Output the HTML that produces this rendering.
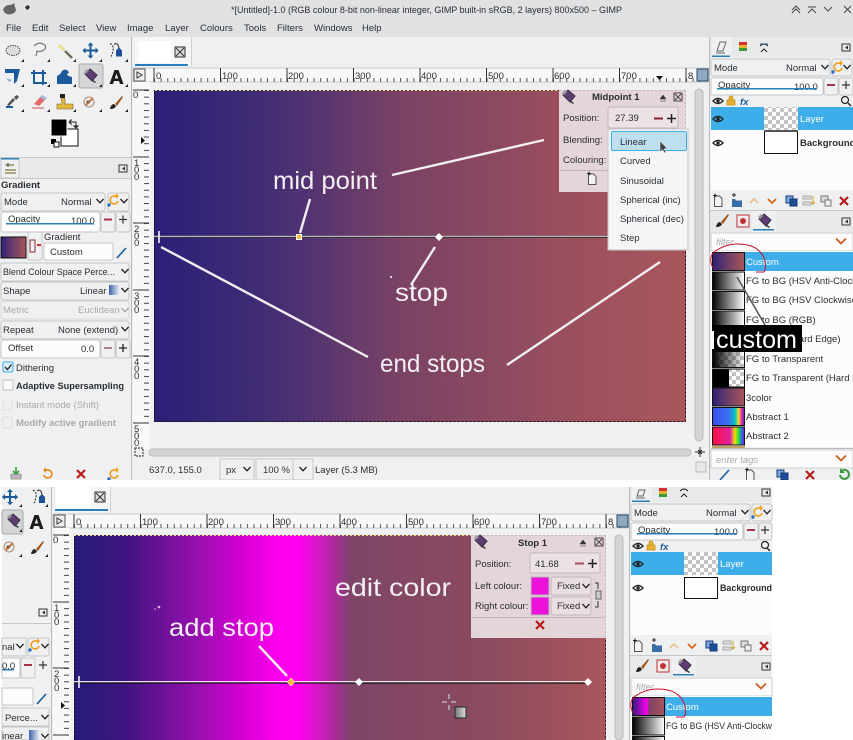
<!DOCTYPE html>
<html><head><meta charset="utf-8"><title>GIMP</title>
<style>
html,body{margin:0;padding:0;background:#fff;width:853px;height:740px;overflow:hidden}
svg{display:block;filter:blur(.35px)}
text{font-family:"Liberation Sans",sans-serif;font-size:9.5px;fill:#2b2e31}
.b{font-weight:bold}
.g{fill:#a8aaac}
.w{fill:#fff}
.big{font-size:25px;fill:#f4f0f4}
.f{fill:#fcfcfc;stroke:#c4c6c8;stroke-width:1}
.btn{fill:#eff0f1;stroke:#c4c6c8;stroke-width:1}
.an{stroke:#f2eef2;stroke-width:2.4;fill:none}
.m{font-size:9px}
</style></head><body>
<svg width="853" height="740" viewBox="0 0 853 740" xmlns="http://www.w3.org/2000/svg">
<defs>
<linearGradient id="g1" gradientUnits="userSpaceOnUse" x1="154" y1="0" x2="686" y2="0">
<stop offset="0" stop-color="#2b1f78"/><stop offset=".18" stop-color="#3e2b75"/><stop offset=".28" stop-color="#4f3272"/><stop offset=".46" stop-color="#7a4264"/><stop offset=".65" stop-color="#8c4a60"/><stop offset=".77" stop-color="#9a4f5e"/><stop offset="1" stop-color="#a9565b"/>
</linearGradient>
<linearGradient id="g2" gradientUnits="userSpaceOnUse" x1="74" y1="0" x2="606" y2="0">
<stop offset="0" stop-color="#261b78"/><stop offset=".1" stop-color="#401480"/><stop offset=".237" stop-color="#9a10b0"/><stop offset=".31" stop-color="#d000d0"/><stop offset=".387" stop-color="#ff00f0"/><stop offset=".425" stop-color="#ff00ee"/><stop offset=".457" stop-color="#d818c8"/><stop offset=".487" stop-color="#b028a0"/><stop offset=".508" stop-color="#8f3a80"/><stop offset=".52" stop-color="#7f4567"/><stop offset=".76" stop-color="#8a4a60"/><stop offset="1" stop-color="#a9565b"/>
</linearGradient>
<linearGradient id="t1"><stop offset="0" stop-color="#2e2076"/><stop offset=".5" stop-color="#703f68"/><stop offset="1" stop-color="#a9565b"/></linearGradient>
<linearGradient id="t2"><stop offset="0" stop-color="#2e1a80"/><stop offset=".45" stop-color="#ff00ee"/><stop offset=".52" stop-color="#804068"/><stop offset="1" stop-color="#a9565b"/></linearGradient>
<linearGradient id="bw"><stop offset="0" stop-color="#000"/><stop offset="1" stop-color="#fff"/></linearGradient>
<linearGradient id="rb"><stop offset="0" stop-color="#3a4cf0"/><stop offset=".5" stop-color="#3a70f0"/><stop offset=".7" stop-color="#00c0c0"/><stop offset=".82" stop-color="#f0e020"/><stop offset=".9" stop-color="#f030a0"/><stop offset="1" stop-color="#4030c0"/></linearGradient>
<linearGradient id="rb2"><stop offset="0" stop-color="#ff1040"/><stop offset=".55" stop-color="#e020a0"/><stop offset=".7" stop-color="#f0e000"/><stop offset=".82" stop-color="#20e040"/><stop offset=".92" stop-color="#3060f0"/><stop offset="1" stop-color="#8020c0"/></linearGradient>
<linearGradient id="shape"><stop offset="0" stop-color="#3f62a8"/><stop offset="1" stop-color="#e4eaf4"/></linearGradient>
<linearGradient id="bt"><stop offset="0" stop-color="#000"/><stop offset="1" stop-color="#000" stop-opacity="0"/></linearGradient>
<linearGradient id="sw"><stop offset="0" stop-color="#777"/><stop offset="1" stop-color="#ddd"/></linearGradient>
<pattern id="chk" width="8" height="8" patternUnits="userSpaceOnUse"><rect width="8" height="8" fill="#fff"/><rect width="4" height="4" fill="#c4c4c4"/><rect x="4" y="4" width="4" height="4" fill="#c4c4c4"/></pattern>
<pattern id="rt1" width="6.65" height="14" patternUnits="userSpaceOnUse" x="154" y="68"><rect x="0" y="10" width="1" height="4" fill="#555"/></pattern>
<pattern id="rt2" width="6.65" height="14" patternUnits="userSpaceOnUse" x="74" y="514"><rect x="0" y="10" width="1" height="4" fill="#555"/></pattern>
<pattern id="rv1" width="16" height="6.65" patternUnits="userSpaceOnUse" x="133" y="90"><rect x="11" y="0" width="5" height="1" fill="#444"/></pattern>
<pattern id="rv2" width="16" height="6.65" patternUnits="userSpaceOnUse" x="53" y="535"><rect x="11" y="0" width="5" height="1" fill="#444"/></pattern>
<g id="grad"><path d="M-5 -2 L0 -7 L7 -1 L2 5Z" fill="#5e3d72" stroke="#3a2a44"/><path d="M-6 -4l3-3 2 2-3 3z" fill="#999"/><path d="M3 4l3 2-1 1-3-2z" fill="#333"/></g>
<g id="eye"><path d="M-5 0Q0 -5 5 0Q0 5 -5 0Z" fill="none" stroke="#222" stroke-width="1.3"/><circle r="1.7" fill="#222"/></g>
<g id="x"><path d="M-4 -4L4 4M4 -4L-4 4" stroke="#b71c1c" stroke-width="2.2"/></g>
<g id="pen"><path d="M-5 5L4 -5" stroke="#1d5a9c" stroke-width="1.6"/></g>
<g id="new"><path d="M-3.500 -5h5l2.500 2.500v8h-7.500z" fill="#f4f4f4" stroke="#555"/><path d="M-5 -5.500h4M-3 -7.500v4" stroke="#222"/></g>
<g id="reset"><path d="M-4 1A4 4 0 1 0 0 -4H-3" fill="none" stroke="#e88a1a" stroke-width="1.7"/><path d="M-2 -7L-5 -4L-2 -1z" fill="#e88a1a"/></g>
<g id="reset2"><path d="M4 1A4 4 0 1 1 0 -4H3" fill="none" stroke="#f0a020" stroke-width="1.7"/><path d="M2 -7L5 -4L2 -1z" fill="#f0a020"/><circle cx="-5" cy="5" r="1.700" fill="#2a70c0"/></g>
<g id="chev"><path d="M-3.500 -2L0 1.800L3.500 -2" fill="none" stroke="#222" stroke-width="1.300"/></g>
<g id="ochev"><path d="M-5 -2.500L0 2.500L5 -2.500" fill="none" stroke="#d05a18" stroke-width="1.800"/></g>
<g id="move"><path d="M0 -7.500V7.500M-7.500 0H7.500" stroke="#1d5a9c" stroke-width="2"/><path d="M0 -8l-3 3h6zM0 8l-3-3h6zM-8 0l3-3v6zM8 0l-3-3v6z" fill="#1d5a9c"/></g>
<g id="path"><path d="M-7 -7Q-3 -5 -4 0T-6 6" stroke="#222" stroke-dasharray="2 1.200" fill="none"/><path d="M-3 -6Q1 -9 2 -2" stroke="#222" fill="none"/><path d="M-1 6V0l3-3 3 3v6z" fill="#1d4e96"/></g>
<g id="textA"><path d="M-7 7L-2 -7H2L7 7H3.500L2.500 4H-2.500L-3.500 7ZM-1.700 1.500H1.700L0 -3.500Z" fill="#1c1c1c"/></g>
<g id="heal"><circle r="5" fill="#eee" stroke="#b08a70"/><path d="M-3 3L4 -4" stroke="#c07a50" stroke-width="2"/><circle cx="-1" cy="0" r="1.600" fill="#8a5a40"/></g>
<g id="brush"><path d="M-6 6Q-5 1 -2 1L0 3Q-1 6 -6 6Z" fill="#222"/><path d="M-1 1L6 -7L7 -6L1 3Z" fill="#a05a20"/></g>
<g id="dockicons">
<use href="#new" x="0" y="0"/>
<path d="M14 -2h3l1 1.500h6v6.500h-10z" fill="#3a6ea8"/><path d="M14 -6h4M16 -8v4" stroke="#222"/>
<path d="M32 2L36 -2L40 2" fill="none" stroke="#e8c090" stroke-width="1.800"/>
<path d="M50 -2L54 2L58 -2" fill="none" stroke="#d86818" stroke-width="1.800"/>
<rect x="68" y="-5" width="7" height="7" fill="#7aa6d8" stroke="#123a78"/><rect x="72" y="-2" width="7" height="7" fill="#1d4e96" stroke="#123a78"/>
<rect x="85" y="-5" width="8" height="3" fill="#ddd" stroke="#aaa"/><rect x="85" y="1" width="8" height="3" fill="#ddd" stroke="#aaa"/><path d="M95 -5v8l-2-2m2 2l2-2" stroke="#d8a020" fill="none"/>
<rect x="103" y="-5" width="7" height="6" fill="#ddd" stroke="#777"/><rect x="107" y="-1" width="6" height="6" fill="#eee" stroke="#777"/>
<use href="#x" x="126"/>
</g>
</defs>

<!-- TOP WINDOW -->
<rect width="853" height="480" fill="#eff0f1"/>
<rect width="853" height="37" fill="#dfe1e3"/>
<path d="M3 10q2-6 8-5l3-2 1 4q2 4-1 6-5 3-9 0z" fill="#666"/>
<path d="M23 12l3-3-1-2 3-2 2 2-2 3-2-1z" fill="#333"/>
<text x="231" y="13" font-size="9.500" textLength="391" lengthAdjust="spacingAndGlyphs">*[Untitled]-1.0 (RGB colour 8-bit non-linear integer, GIMP built-in sRGB, 2 layers) 800x500 – GIMP</text>
<path d="M792 10l4-4 4 4M792 13l4-4 4 4M808 7h8M808 13l4-4 4 4M824 7l4 4 4-4M844 6l7 7M851 6l-7 7" fill="none" stroke="#444" stroke-width="1"/>
<g>
<text x="6" y="31">File</text><text x="32" y="31">Edit</text><text x="59" y="31">Select</text><text x="96" y="31">View</text><text x="127" y="31">Image</text><text x="165" y="31">Layer</text><text x="200" y="31">Colours</text><text x="244" y="31">Tools</text><text x="277" y="31">Filters</text><text x="314" y="31">Windows</text><text x="362" y="31">Help</text>
</g>
<!-- toolbox -->
<rect x="131" y="37" width="1" height="443" fill="#b8babc"/>
<rect x="79" y="64" width="24" height="24" rx="2" fill="#d3d5d7" stroke="#a8aaac"/>
<ellipse cx="13" cy="50.500" rx="7" ry="5" fill="#ddd" stroke="#444" stroke-dasharray="1.500 1"/>
<path d="M34 46q5-5 11-1 2 4-3 6-3 1-5 0l-1 5" fill="none" stroke="#777" stroke-width="1.200"/>
<path d="M59 45l5 5M65 51l7 7" stroke="#f0dc90" stroke-width="3"/><path d="M65 51l7 7" stroke="#666" stroke-width="2.200"/>
<use href="#move" x="90.500" y="50.500"/>
<use href="#path" x="117" y="50.500"/>
<path d="M5 69h15l-3 12-3 3v-11h-9z" fill="#1d5a9c"/><path d="M6 78l6 2-3 2z" fill="#8ab0d8"/>
<path d="M31 73h15M43 70v15M34 70v13h13" fill="none" stroke="#1d5a9c" stroke-width="2"/>
<path d="M57 84v-8q4-2 5-5 3-3 6 0 2 2-1 3 0 2 5 3v7z" fill="#1d5a9c"/>
<use href="#grad" x="90" y="76"/>
<use href="#textA" x="116.500" y="77"/>
<path d="M7 105l6-7 2 2-6 6zM14 97l3-2 2 2-3 3z" fill="#555"/><path d="M6 107h7" stroke="#1d5a9c" stroke-width="2"/>
<path d="M34 104l8-9 5 3-8 8z" fill="#e46a6a"/><path d="M40 97l2-2 5 3-2 2z" fill="#9cc0e0"/><path d="M32 108h12" stroke="#d05050"/>
<path d="M57 109v-5h5v-2q-2-4 1-4t2 4v2h8v5z" fill="#e0b840" stroke="#7a6020" stroke-width=".600"/><rect x="60" y="94" width="5" height="4" fill="#222"/>
<use href="#heal" x="89" y="102"/>
<use href="#brush" x="116" y="103"/>
<g fill="#222"><path d="M24 62h-3l3-3zM50 62h-3l3-3zM76 62h-3l3-3zM102 62h-3l3-3zM128 62h-3l3-3zM24 87h-3l3-3zM50 87h-3l3-3zM76 87h-3l3-3zM102 87h-3l3-3zM128 87h-3l3-3zM24 112h-3l3-3zM50 112h-3l3-3zM76 112h-3l3-3zM102 112h-3l3-3zM128 112h-3l3-3z"/></g>
<rect x="61" y="129" width="17" height="17" fill="#fff" stroke="#111"/>
<rect x="51" y="119" width="16" height="17" fill="#000" stroke="#fff"/>
<path d="M72 122h4v5M71 120v4l-2-2zM74 126h4l-2 2z" fill="none" stroke="#222"/>
<rect x="51" y="139" width="5" height="5" fill="#000"/><rect x="54" y="142" width="5" height="5" fill="#fff" stroke="#111"/>
<rect x="0" y="157" width="131" height="1" fill="#c4c6c8"/>
<rect x="0" y="158" width="131" height="20" fill="#e8e9ea"/>
<rect x="1" y="158" width="18" height="20" fill="#eff0f1" stroke="#c4c6c8"/><rect x="1" y="158" width="18" height="1.500" fill="#2980b9"/>
<path d="M5 165h9M5 170h11M5 173h11" stroke="#8a7840" stroke-width="1.200" fill="none"/><path d="M8 163v4" stroke="#333"/>
<rect x="119" y="165" width="8" height="7" fill="none" stroke="#333"/><path d="M122 168.500l3-2v4z" fill="#333"/>
<rect x="0" y="178" width="131" height="1" fill="#c4c6c8"/>
<text x="1" y="188" class="b" font-size="9.500">Gradient</text>
<rect x="1" y="193" width="104" height="18" rx="2" class="btn"/><text x="4" y="205">Mode</text><text x="61" y="205">Normal</text><use href="#chev" x="100" y="201"/>
<rect x="108" y="193" width="21" height="18" rx="2" class="btn"/><use href="#reset2" x="114" y="200"/><use href="#chev" x="124" y="201"/>
<rect x="1" y="212" width="99" height="20" rx="2" class="f"/><text x="8" y="222">Opacity</text><text x="71" y="224">100.0</text><rect x="6" y="223" width="88" height="1.500" fill="#2980b9"/>
<rect x="101" y="212" width="14" height="20" rx="2" class="btn"/><path d="M104 219.500h8" stroke="#a8324a" stroke-width="2"/>
<rect x="116" y="212" width="14" height="20" rx="2" class="btn"/><path d="M119 219.500h8M123 215.500v8" stroke="#333" stroke-width="1.200"/>
<rect x="1" y="237" width="25" height="21" fill="url(#t1)" stroke="#111"/>
<rect x="28" y="232" width="14" height="28" rx="2" class="btn"/><rect x="30" y="240" width="5" height="12" fill="none" stroke="#8a2a2a"/><path d="M41 245l-4 0" stroke="#c83030" stroke-width="2"/>
<text x="44" y="240">Gradient</text>
<rect x="44" y="243" width="69" height="17" rx="2" class="f"/><text x="50" y="255">Custom</text><use href="#pen" x="122" y="253"/>
<rect x="1" y="263" width="128" height="18" rx="2" class="btn"/><text x="3" y="275" textLength="112" lengthAdjust="spacingAndGlyphs">Blend Colour Space Perce...</text><use href="#chev" x="125" y="271"/>
<rect x="1" y="282" width="128" height="18" rx="2" class="btn"/><text x="3" y="294">Shape</text><text x="80" y="294">Linear</text><rect x="109" y="285" width="10" height="10" fill="url(#shape)"/><use href="#chev" x="125" y="290"/>
<rect x="1" y="301" width="128" height="18" rx="2" fill="#eff0f1" stroke="#d8d9da"/><text x="3" y="313" class="g">Metric</text><text x="78" y="313" class="g">Euclidean</text><use href="#chev" x="125" y="310" opacity=".35"/>
<rect x="1" y="321" width="128" height="18" rx="2" class="btn"/><text x="3" y="333">Repeat</text><text x="58" y="333">None (extend)</text><use href="#chev" x="125" y="329"/>
<rect x="1" y="340" width="99" height="18" rx="2" class="f"/><text x="8" y="351">Offset</text><text x="81" y="352">0.0</text>
<rect x="101" y="340" width="14" height="18" rx="2" class="btn"/><path d="M104 348h8" stroke="#b08090" stroke-width="2"/>
<rect x="116" y="340" width="14" height="18" rx="2" class="btn"/><path d="M119 348h8M123 344v8" stroke="#222" stroke-width="1.300"/>
<rect x="3" y="362" width="10" height="10" rx="1.500" fill="#dceef8" stroke="#3daee9"/><path d="M5 367l2.500 2.500 4-5" fill="none" stroke="#222" stroke-width="1.400"/><text x="16" y="371">Dithering</text>
<rect x="3" y="380" width="10" height="10" rx="1.500" fill="#fcfcfc" stroke="#bbb"/><text x="16" y="389" class="b" textLength="108" lengthAdjust="spacingAndGlyphs">Adaptive Supersampling</text>
<rect x="3" y="400" width="9" height="10" rx="1.500" fill="none" stroke="#dedfe0"/><text x="16" y="408" class="g">Instant mode  (Shift)</text>
<rect x="3" y="417" width="9" height="11" rx="1.500" fill="none" stroke="#dedfe0"/><text x="16" y="426" class="g b" textLength="100" lengthAdjust="spacingAndGlyphs">Modify active gradient</text>
<path d="M11 474h10v5h-10z" fill="#bbb" stroke="#666" stroke-width=".600"/><path d="M16 467v6M13 471l3 3 3-3" stroke="#3a9a3a" stroke-width="1.600" fill="none"/>
<use href="#reset" x="48" y="474"/><use href="#x" x="81" y="474"/><use href="#reset2" x="114" y="474"/>

<!-- tab & ruler -->
<rect x="135" y="37" width="56" height="29" fill="#f4f5f6"/><rect x="191" y="37" width="1" height="29" fill="#d0d2d4"/>
<rect x="139" y="41" width="32" height="22" fill="#fff"/>
<rect x="175" y="47" width="10" height="10" fill="#ddd" stroke="#333"/><path d="M176 48l8 8M184 48l-8 8" stroke="#333"/>
<rect x="135" y="64" width="53" height="2" fill="#2980b9"/>
<rect x="133" y="68" width="576" height="14" fill="#f8f8f8" stroke="#c8cacc"/>
<rect x="134" y="69" width="11" height="12" fill="#eee" stroke="#555"/><path d="M137 72l5 3-5 3z" fill="none" stroke="#333"/>
<rect x="154" y="68" width="552" height="14" fill="url(#rt1)"/>
<g font-size="9">
<text x="156" y="79">0</text><text x="222" y="79">100</text><text x="288" y="79">200</text><text x="355" y="79">300</text><text x="421" y="79">400</text><text x="488" y="79">500</text><text x="554" y="79">600</text><text x="621" y="79">700</text><text x="688" y="79">8</text>
</g>
<path d="M154 68v14M220.500 68v14M287 68v14M353.500 68v14M420 68v14M486.500 68v14M553 68v14M619.500 68v14M686 68v14" stroke="#333"/>
<path d="M656 76h7l-3.500 4z" fill="#111"/>
<rect x="697" y="69" width="11" height="12" fill="#8fa8c0" stroke="#2a4a6a"/>
<!-- vertical ruler -->
<rect x="133" y="82" width="17" height="368" fill="#f8f8f8"/>
<rect x="133" y="90" width="16" height="333" fill="url(#rv1)"/>
<g font-size="8.500">
<path d="M133 90h16M133 157h16M133 223h16M133 290h16M133 356h16M133 423h16" stroke="#333"/>
<text x="133" y="98">0</text>
<text x="134" y="166">1</text><text x="134" y="173">0</text><text x="134" y="180">0</text>
<text x="134" y="232">2</text><text x="134" y="239">0</text><text x="134" y="246">0</text>
<text x="134" y="299">3</text><text x="134" y="306">0</text><text x="134" y="313">0</text>
<text x="134" y="365">4</text><text x="134" y="372">0</text><text x="134" y="379">0</text>
<text x="134" y="432">5</text><text x="134" y="439">0</text><text x="134" y="446">0</text>
</g>
<path d="M141 137v7l4-3.500z" fill="#111"/>
<!-- canvas -->
<rect x="154" y="90" width="532" height="332" fill="url(#g1)"/>
<rect x="154.500" y="90.500" width="531" height="331" fill="none" stroke="#111" stroke-dasharray="2 2"/>
<path d="M155 90.500H686" stroke="#ead870" stroke-dasharray="2 2"/>
<rect x="695" y="89" width="8" height="352" rx="4" fill="#d4d5d6" stroke="#bbb"/>
<rect x="149" y="449" width="542" height="7" rx="3.500" fill="#d4d5d6" stroke="#bbb"/>
<rect x="135" y="448" width="8" height="8" fill="#eee" stroke="#222" stroke-dasharray="2 1"/>
<path d="M700 447v10M695 452h10M698 450l4 4M702 450l-4 4" stroke="#333"/>
<rect x="696" y="462" width="10" height="10" fill="#e8e8e8" stroke="#bbb"/>
<path d="M154 237.500H610" stroke="#111" stroke-width="1"/><path d="M154 236.500H610" stroke="#b4b0b8" stroke-width="1.400"/>
<path d="M159 231v12" stroke="#fff" stroke-width="1.500"/>
<rect x="296.500" y="234.500" width="5" height="5" fill="#f0c040" stroke="#fff"/>
<path d="M439 233l4 4-4 4-4-4z" fill="#fff"/>
<circle cx="391" cy="277" r="1" fill="#fff"/>
<path class="an" d="M392 175L544 140M300 233L310 199M161 247L368 357M411 285L435 247M507 365L660 262"/>
<text x="273" y="189" class="big" textLength="104" lengthAdjust="spacingAndGlyphs">mid point</text>
<text x="395" y="301" class="big" textLength="53" lengthAdjust="spacingAndGlyphs">stop</text>
<text x="380" y="372" class="big" textLength="105" lengthAdjust="spacingAndGlyphs">end stops</text>
<!-- midpoint dialog -->
<rect x="559" y="90" width="127" height="102" fill="#e3d5d8"/>
<path d="M559 90.500h127M685.500 90v102" stroke="#c4b6ba" stroke-dasharray="2 2"/>
<use href="#grad" x="568" y="97"/>
<text x="592" y="100" class="b">Midpoint 1</text>
<path d="M660 99l3-4 3 4zM660 101h6" fill="#333" stroke="#333" stroke-width=".500"/>
<rect x="674" y="93" width="8" height="8" fill="none" stroke="#444"/><path d="M675 94l6 6M681 94l-6 6" stroke="#444"/>
<text x="563" y="121">Position:</text>
<rect x="608" y="107" width="70" height="21" rx="2" fill="#ece2e4" stroke="#c4b6ba"/>
<text x="615" y="121">27.39</text>
<path d="M654 118.500h9" stroke="#8c1f2b" stroke-width="2"/><path d="M667 118.500h9M671.500 114v9" stroke="#222" stroke-width="1.500"/>
<text x="563" y="143">Blending:</text><text x="563" y="163">Colouring:</text>
<path d="M560 170.500h48" stroke="#c4b6ba"/>
<use href="#new" x="592" y="179"/>
<rect x="608" y="129" width="80" height="121" fill="#f4f5f6" stroke="#c4c6c8"/>
<rect x="611.500" y="131.500" width="75" height="19" rx="1.500" fill="#bddff0" stroke="#3daee9"/>
<g font-size="9">
<text x="620" y="145">Linear</text><text x="620" y="164">Curved</text><text x="620" y="184">Sinusoidal</text><text x="620" y="203">Spherical (inc)</text><text x="620" y="222">Spherical (dec)</text><text x="620" y="241">Step</text>
</g>
<path d="M660 141v11l2.500-2.500 2 3.500 1.500-.8-1.800-3.300 3-.4z" fill="#444" stroke="#fff" stroke-width=".500"/>
<!-- status -->
<text x="149" y="473">637.0, 155.0</text>
<rect x="220" y="459" width="34" height="21" class="btn"/><text x="226" y="473">px</text><use href="#chev" x="247" y="469"/>
<rect x="256" y="459" width="37" height="21" class="btn"/><text x="263" y="473">100 %</text>
<rect x="293" y="459" width="20" height="21" class="btn"/><use href="#chev" x="303" y="469"/>
<text x="315" y="473">Layer (5.3 MB)</text>

<!-- TOP RIGHT DOCK -->
<rect x="709" y="37" width="1" height="443" fill="#b8babc"/>
<rect x="710" y="37" width="143" height="20" fill="#e8e9ea"/>
<rect x="712" y="37" width="20" height="20" fill="#eff0f1"/><rect x="712" y="55.500" width="18" height="1.500" fill="#2980b9"/>
<path d="M717 51l3-9h6l-3 9zM716 53h9" fill="none" stroke="#666"/>
<rect x="739" y="42" width="8" height="3" fill="#d03030"/><rect x="739" y="45" width="8" height="3" fill="#e8b030"/><rect x="739" y="48" width="8" height="3" fill="#3a9a3a"/>
<path d="M760 46q4-4 8 0M761 52l3-3 3 3" fill="none" stroke="#222"/><path d="M760 44h3M765 44h3" stroke="#1d5a9c"/>
<rect x="842" y="44" width="8" height="7" fill="none" stroke="#333"/><path d="M845 47.500l3-2v4z" fill="#333"/>
<rect x="711" y="59" width="119" height="17" rx="2" class="btn"/><text x="714" y="71">Mode</text><text x="786" y="71">Normal</text><use href="#chev" x="825" y="67"/>
<rect x="832" y="59" width="20" height="17" rx="2" class="btn"/><use href="#reset2" x="838" y="67"/><use href="#chev" x="847" y="67"/>
<rect x="711" y="78" width="112" height="17" rx="2" class="f"/><text x="718" y="88">Opacity</text><text x="794" y="90">100.0</text><rect x="717" y="88" width="100" height="1.500" fill="#2980b9"/>
<rect x="824" y="78" width="14" height="17" rx="2" class="btn"/><path d="M827 85h8" stroke="#a8324a" stroke-width="2"/>
<rect x="839" y="78" width="14" height="17" rx="2" class="btn"/><path d="M842 85h8M846 81v8" stroke="#333" stroke-width="1.200"/>
<use href="#eye" x="718" y="101"/>
<path d="M727 105v-5h8v5zM729 100v-2a2 2 0 0 1 4 0v2" fill="#e8b030" stroke="#c89020" stroke-width=".800"/>
<text x="740" y="105" class="b" font-size="9" style="fill:#1d5a9c;font-style:italic">fx</text>
<circle cx="845" cy="100" r="3.500" fill="none" stroke="#222" stroke-width="1.200"/><path d="M848 103l3 3" stroke="#222" stroke-width="1.400"/>
<rect x="711" y="107" width="142" height="83" fill="#fcfcfc"/>
<rect x="711" y="107" width="142" height="23" fill="#3daee9"/>
<use href="#eye" x="718" y="119"/>
<rect x="764" y="107" width="34" height="23" fill="url(#chk)"/>
<text x="800" y="122" class="w">Layer</text>
<use href="#eye" x="718" y="143"/>
<rect x="764.500" y="131.500" width="33" height="22" fill="#fff" stroke="#111"/><rect x="764" y="130" width="34" height="2" fill="#555"/>
<text x="800" y="146" class="b">Background</text>
<rect x="711" y="190" width="142" height="20" fill="#eff0f1"/>
<use href="#dockicons" x="718" y="201"/>
<rect x="710" y="210" width="143" height="1" fill="#c4c6c8"/>
<rect x="710" y="211" width="143" height="21" fill="#e8e9ea"/>
<rect x="752" y="211" width="24" height="21" fill="#eff0f1"/><rect x="753" y="229" width="21" height="1.500" fill="#2980b9"/>
<use href="#brush" x="722" y="221"/>
<rect x="737" y="215" width="12" height="12" fill="#eee" stroke="#c03030"/><circle cx="743" cy="221" r="3" fill="#c03030"/>
<use href="#grad" x="764" y="221"/>
<rect x="842" y="218" width="8" height="7" fill="none" stroke="#333"/><path d="M845 221.500l3-2v4z" fill="#333"/>
<rect x="711" y="233" width="142" height="18" fill="#fcfcfc" stroke="#ccc"/>
<text x="716" y="245" class="g" style="font-style:italic">filter</text><use href="#ochev" x="841" y="241"/>
<rect x="711" y="251" width="142" height="196" fill="#fcfcfc"/>
<rect x="745" y="252" width="108" height="19" fill="#3daee9"/>
<g stroke="#111" stroke-width="1">
<rect x="712.500" y="252.500" width="32" height="18" fill="url(#t1)"/>
<rect x="712.500" y="272" width="32" height="18" fill="url(#bw)"/>
<rect x="712.500" y="291.500" width="32" height="18" fill="url(#bw)"/>
<rect x="712.500" y="311" width="32" height="18" fill="url(#bw)"/>
<rect x="712.500" y="349.500" width="32" height="18" fill="url(#chk)"/>
<rect x="712.500" y="369" width="32" height="18" fill="url(#chk)"/>
<rect x="712.500" y="388" width="32" height="18" fill="url(#t1)"/>
<rect x="712.500" y="407.500" width="32" height="18" fill="url(#rb)"/>
<rect x="712.500" y="427" width="32" height="18" fill="url(#rb2)"/>
</g>
<rect x="713" y="350" width="31" height="17" fill="url(#bt)"/>
<rect x="713" y="369.500" width="16" height="17" fill="#000"/>
<rect x="712" y="446" width="33" height="2" fill="#c0a060"/>
<text x="746" y="265" class="w">Custom</text>
<text x="746" y="284">FG to BG (HSV Anti-Clockwise Hue)</text>
<text x="746" y="303">FG to BG (HSV Clockwise Hue)</text>
<text x="746" y="323">FG to BG (RGB)</text>
<text x="746" y="342">FG to BG (Hard Edge)</text>
<text x="746" y="362">FG to Transparent</text>
<text x="746" y="381">FG to Transparent (Hard Edge)</text>
<text x="746" y="401">3color</text>
<text x="746" y="420">Abstract 1</text>
<text x="746" y="439">Abstract 2</text>
<rect x="711" y="448" width="142" height="1" fill="#bbb"/>
<rect x="711" y="450" width="142" height="18" fill="#fcfcfc" stroke="#ccc"/>
<text x="716" y="463" class="g" style="font-style:italic">enter tags</text><use href="#ochev" x="841" y="458"/>
<use href="#pen" x="725" y="475"/><use href="#new" x="750" y="475"/>
<rect x="777" y="470" width="7" height="7" fill="#7aa6d8" stroke="#123a78"/><rect x="781" y="473" width="7" height="7" fill="#1d4e96" stroke="#123a78"/>
<use href="#x" x="810" y="475"/>
<path d="M840 475a4.500 4.500 0 1 0 1.500-4" fill="none" stroke="#3a9a3a" stroke-width="2"/><path d="M840 468v5h5z" fill="#3a9a3a"/>
<path d="M737 277L765 325" stroke="#555" stroke-width="1.500"/>
<rect x="712" y="325" width="90" height="27" fill="#000"/>
<rect x="712" y="331" width="2" height="18" fill="#fff"/>
<text x="716" y="348" class="big" style="fill:#fff" font-size="25" textLength="81" lengthAdjust="spacingAndGlyphs">custom</text>
<path d="M713 268Q708 258 714 252Q725 244 738 244Q758 244 764 258Q767 268 764 272L756 272" fill="none" stroke="#c8102e" stroke-width="1"/>

<!-- BOTTOM WINDOW -->
<rect x="0" y="480" width="853" height="260" fill="#fff"/>
<rect x="2" y="487" width="770" height="253" fill="#eff0f1"/>
<rect x="51" y="487" width="1" height="253" fill="#b8babc"/>
<rect x="2" y="510" width="21" height="24" rx="2" fill="#d3d5d7" stroke="#a8aaac"/>
<use href="#move" x="10" y="497"/><use href="#path" x="40" y="497"/>
<use href="#grad" x="13" y="521"/><use href="#textA" x="36.500" y="522"/>
<use href="#heal" x="9" y="547"/><use href="#brush" x="37" y="548"/>
<g fill="#222"><path d="M22 507h-3l3-3zM48 507h-3l3-3zM22 532h-3l3-3zM22 557h-3l3-3zM48 557h-3l3-3z"/></g>
<rect x="39" y="609" width="8" height="7" fill="none" stroke="#333"/><path d="M42 612.500l3-2v4z" fill="#333"/>
<rect x="2" y="623" width="49" height="1" fill="#c4c6c8"/>
<rect x="2" y="638" width="24" height="18" class="btn"/><text x="2" y="650">nal</text><use href="#chev" x="20" y="646"/>
<rect x="28" y="638" width="21" height="18" rx="2" class="btn"/><use href="#reset2" x="35" y="645"/><use href="#chev" x="45" y="646"/>
<rect x="2" y="658" width="18" height="20" class="f"/><text x="2" y="669">0.0</text><rect x="2" y="669" width="12" height="1.500" fill="#2980b9"/>
<rect x="21" y="658" width="14" height="20" rx="2" class="btn"/><path d="M24 665h8" stroke="#a8324a" stroke-width="2"/>
<path d="M39 665h8M43 661v8" stroke="#333" stroke-width="1.200"/>
<rect x="2" y="688" width="31" height="17" class="f"/><use href="#pen" x="42" y="699"/>
<rect x="2" y="708" width="47" height="18" class="btn"/><text x="5" y="721">Perce...</text><use href="#chev" x="45" y="717"/>
<rect x="2" y="727" width="47" height="13" class="btn"/><text x="2" y="739">inear</text><rect x="29" y="730" width="10" height="10" fill="url(#shape)"/><use href="#chev" x="45" y="736"/>
<!-- tab/ruler -->
<rect x="55" y="487" width="55" height="25" fill="#f4f5f6"/><rect x="110" y="487" width="1" height="26" fill="#d0d2d4"/>
<rect x="56" y="487" width="35" height="21" fill="#fff"/>
<rect x="95" y="492" width="10" height="10" fill="#ddd" stroke="#333"/><path d="M96 493l8 8M104 493l-8 8" stroke="#333"/>
<rect x="55" y="509" width="53" height="2" fill="#2980b9"/>
<rect x="53" y="514" width="576" height="14" fill="#f8f8f8" stroke="#c8cacc"/>
<rect x="54" y="515" width="11" height="12" fill="#eee" stroke="#555"/><path d="M57 518l5 3-5 3z" fill="none" stroke="#333"/>
<rect x="74" y="514" width="552" height="14" fill="url(#rt2)"/>
<g font-size="9">
<text x="76" y="525">0</text><text x="142" y="525">100</text><text x="208" y="525">200</text><text x="275" y="525">300</text><text x="341" y="525">400</text><text x="408" y="525">500</text><text x="474" y="525">600</text><text x="541" y="525">700</text><text x="608" y="525">8</text>
</g>
<path d="M74 514v14M140.500 514v14M207 514v14M273.500 514v14M340 514v14M406.500 514v14M473 514v14M539.500 514v14M606 514v14" stroke="#333"/>
<rect x="617" y="515" width="11" height="12" fill="#8fa8c0" stroke="#2a4a6a"/>
<rect x="53" y="528" width="17" height="212" fill="#f8f8f8"/>
<rect x="53" y="535" width="16" height="205" fill="url(#rv2)"/>
<g font-size="8.500">
<path d="M53 535h16M53 602h16M53 668h16M53 735h16" stroke="#333"/>
<text x="53" y="543">0</text>
<text x="54" y="611">1</text><text x="54" y="618">0</text><text x="54" y="625">0</text>
<text x="54" y="677">2</text><text x="54" y="684">0</text><text x="54" y="691">0</text>
</g>
<path d="M61 702v7l4-3.500z" fill="#111"/>
<rect x="74" y="535" width="532" height="205" fill="url(#g2)"/>
<path d="M74.500 535v205" stroke="#111" stroke-dasharray="2 2"/><path d="M74 535.500H606" stroke="#ead870" stroke-dasharray="2 2"/><path d="M605.500 640v100" stroke="#222" stroke-dasharray="2 2"/>
<rect x="615" y="535" width="8" height="205" rx="4" fill="#d4d5d6" stroke="#bbb"/>
<path d="M74 683H590" stroke="#111" stroke-width="1.200"/><path d="M74 681.700H590" stroke="#fff" stroke-width="1.200"/>
<path d="M79 676v12" stroke="#fff" stroke-width="1.500"/>
<path d="M291 678l4 4-4 4-4-4z" fill="#f0c040" stroke="#fff" stroke-width=".500"/>
<path d="M359 678l4 4-4 4-4-4z" fill="#fff"/>
<path d="M588 678l4 4-4 4-4-4z" fill="#fff"/>
<circle cx="159" cy="607" r="1.300" fill="#e8b8ee"/><circle cx="155" cy="609" r="1" fill="#b070c8"/>
<path d="M449 694v5M449 705v5M442 702h5M451 702h5" stroke="#fff" stroke-width="1.500"/><path d="M449 694v5M449 705v5M442 702h5M451 702h5" stroke="#222" stroke-width=".500"/>
<rect x="455" y="707" width="11" height="11" fill="url(#sw)" stroke="#222"/>
<path class="an" d="M259 646L287 676"/>
<text x="169" y="636" class="big" textLength="105" lengthAdjust="spacingAndGlyphs">add stop</text>
<text x="335" y="596" class="big" textLength="116" lengthAdjust="spacingAndGlyphs">edit color</text>
<!-- stop dialog -->
<rect x="471" y="535" width="135" height="103" fill="#e3d5d8"/>
<path d="M471 535.500h135M605.500 535v103" stroke="#c4b6ba" stroke-dasharray="2 2"/>
<use href="#grad" x="480" y="542"/>
<text x="518" y="546" class="b">Stop 1</text>
<path d="M580 544l3-4 3 4zM580 546h6" fill="#333" stroke="#333" stroke-width=".500"/>
<rect x="595" y="538" width="8" height="8" fill="none" stroke="#444"/><path d="M596 539l6 6M602 539l-6 6" stroke="#444"/>
<text x="475" y="567">Position:</text>
<rect x="530" y="553" width="70" height="20" rx="2" fill="#ece2e4" stroke="#c4b6ba"/>
<text x="535" y="567">41.68</text>
<path d="M575 563.500h9" stroke="#a05060" stroke-width="2"/><path d="M588 563.500h9M592.500 559v9" stroke="#222" stroke-width="1.500"/>
<text x="475" y="589">Left colour:</text><text x="475" y="609">Right colour:</text>
<rect x="531" y="577" width="18" height="18" fill="#ee10dc" stroke="#bbb"/>
<rect x="531" y="597" width="18" height="18" fill="#ee10dc" stroke="#bbb"/>
<rect x="551" y="577" width="40" height="18" rx="2" fill="#e8dee0" stroke="#c4b6ba"/><text x="557" y="589">Fixed</text><use href="#chev" x="586" y="586"/>
<rect x="551" y="597" width="40" height="18" rx="2" fill="#e8dee0" stroke="#c4b6ba"/><text x="557" y="609">Fixed</text><use href="#chev" x="586" y="606"/>
<path d="M595 583h3v6M595 607h3v-6" fill="none" stroke="#333"/><rect x="596" y="591" width="5" height="8" fill="#ccc" stroke="#666"/>
<path d="M472 617.500h133" stroke="#c4b6ba"/>
<use href="#x" x="540" y="625"/>
<!-- bottom right dock -->
<rect x="629" y="487" width="1" height="253" fill="#b8babc"/>
<rect x="630" y="487" width="142" height="15" fill="#e8e9ea"/>
<rect x="632" y="487" width="20" height="15" fill="#eff0f1"/><rect x="632" y="500.500" width="18" height="1.500" fill="#2980b9"/>
<path d="M637 496l2-6h6l-2 6zM636 498h9" fill="none" stroke="#666"/>
<rect x="659" y="488" width="8" height="3" fill="#d03030"/><rect x="659" y="491" width="8" height="3" fill="#e8b030"/><rect x="659" y="494" width="8" height="3" fill="#3a9a3a"/>
<path d="M680 491q4-4 8 0M681 497l3-3 3 3" fill="none" stroke="#222"/>
<rect x="762" y="489" width="8" height="7" fill="none" stroke="#333"/><path d="M765 492.500l3-2v4z" fill="#333"/>
<rect x="631" y="504" width="119" height="17" rx="2" class="btn"/><text x="634" y="516">Mode</text><text x="706" y="516">Normal</text><use href="#chev" x="745" y="512"/>
<rect x="752" y="504" width="20" height="17" rx="2" class="btn"/><use href="#reset2" x="758" y="512"/><use href="#chev" x="767" y="512"/>
<rect x="631" y="523" width="112" height="17" rx="2" class="f"/><text x="638" y="533">Opacity</text><text x="714" y="535">100.0</text><rect x="637" y="533" width="100" height="1.500" fill="#2980b9"/>
<rect x="744" y="523" width="14" height="17" rx="2" class="btn"/><path d="M747 530h8" stroke="#a8324a" stroke-width="2"/>
<rect x="759" y="523" width="13" height="17" rx="2" class="btn"/><path d="M761 530h8M765 526v8" stroke="#333" stroke-width="1.200"/>
<use href="#eye" x="638" y="546"/>
<path d="M647 550v-5h8v5zM649 545v-2a2 2 0 0 1 4 0v2" fill="#e8b030" stroke="#c89020" stroke-width=".800"/>
<text x="660" y="550" class="b" font-size="9" style="fill:#1d5a9c;font-style:italic">fx</text>
<circle cx="765" cy="545" r="3.500" fill="none" stroke="#222" stroke-width="1.200"/><path d="M767 548l3 3" stroke="#222" stroke-width="1.400"/>
<rect x="631" y="552" width="141" height="83" fill="#fcfcfc"/>
<rect x="631" y="552" width="141" height="23" fill="#3daee9"/>
<use href="#eye" x="638" y="564"/>
<rect x="684" y="552" width="34" height="23" fill="url(#chk)"/>
<text x="720" y="567" class="w">Layer</text>
<use href="#eye" x="638" y="588"/>
<rect x="684.500" y="577.500" width="33" height="21" fill="#fff" stroke="#111"/>
<text x="720" y="591" class="b" textLength="52" lengthAdjust="spacingAndGlyphs">Background</text>
<use href="#dockicons" x="638" y="646"/>
<rect x="630" y="655" width="142" height="1" fill="#c4c6c8"/>
<rect x="630" y="656" width="142" height="21" fill="#e8e9ea"/>
<rect x="672" y="656" width="24" height="21" fill="#eff0f1"/><rect x="673" y="674" width="21" height="1.500" fill="#2980b9"/>
<use href="#brush" x="642" y="666"/>
<rect x="657" y="660" width="12" height="12" fill="#eee" stroke="#c03030"/><circle cx="663" cy="666" r="3" fill="#c03030"/>
<use href="#grad" x="684" y="666"/>
<rect x="762" y="663" width="8" height="7" fill="none" stroke="#333"/><path d="M765 666.500l3-2v4z" fill="#333"/>
<rect x="631" y="678" width="141" height="18" fill="#fcfcfc" stroke="#ccc"/>
<text x="636" y="690" class="g" style="font-style:italic">filter</text><use href="#ochev" x="761" y="686"/>
<rect x="631" y="696" width="141" height="44" fill="#fcfcfc"/>
<rect x="665" y="697" width="107" height="19" fill="#3daee9"/>
<g stroke="#111">
<rect x="632.500" y="697.500" width="32" height="18" fill="url(#t2)"/>
<rect x="632.500" y="717" width="32" height="18" fill="url(#bw)"/>
<rect x="632.500" y="736.500" width="32" height="6" fill="url(#bw)"/>
</g>
<text x="666" y="710" class="w">Custom</text>
<text x="666" y="729" textLength="106" lengthAdjust="spacingAndGlyphs">FG to BG (HSV Anti-Clockw</text>
<path d="M633 713Q628 703 634 697Q645 689 658 689Q678 689 684 703Q687 713 684 717L676 717" fill="none" stroke="#c8102e" stroke-width="1"/>
</svg>
</body></html>
